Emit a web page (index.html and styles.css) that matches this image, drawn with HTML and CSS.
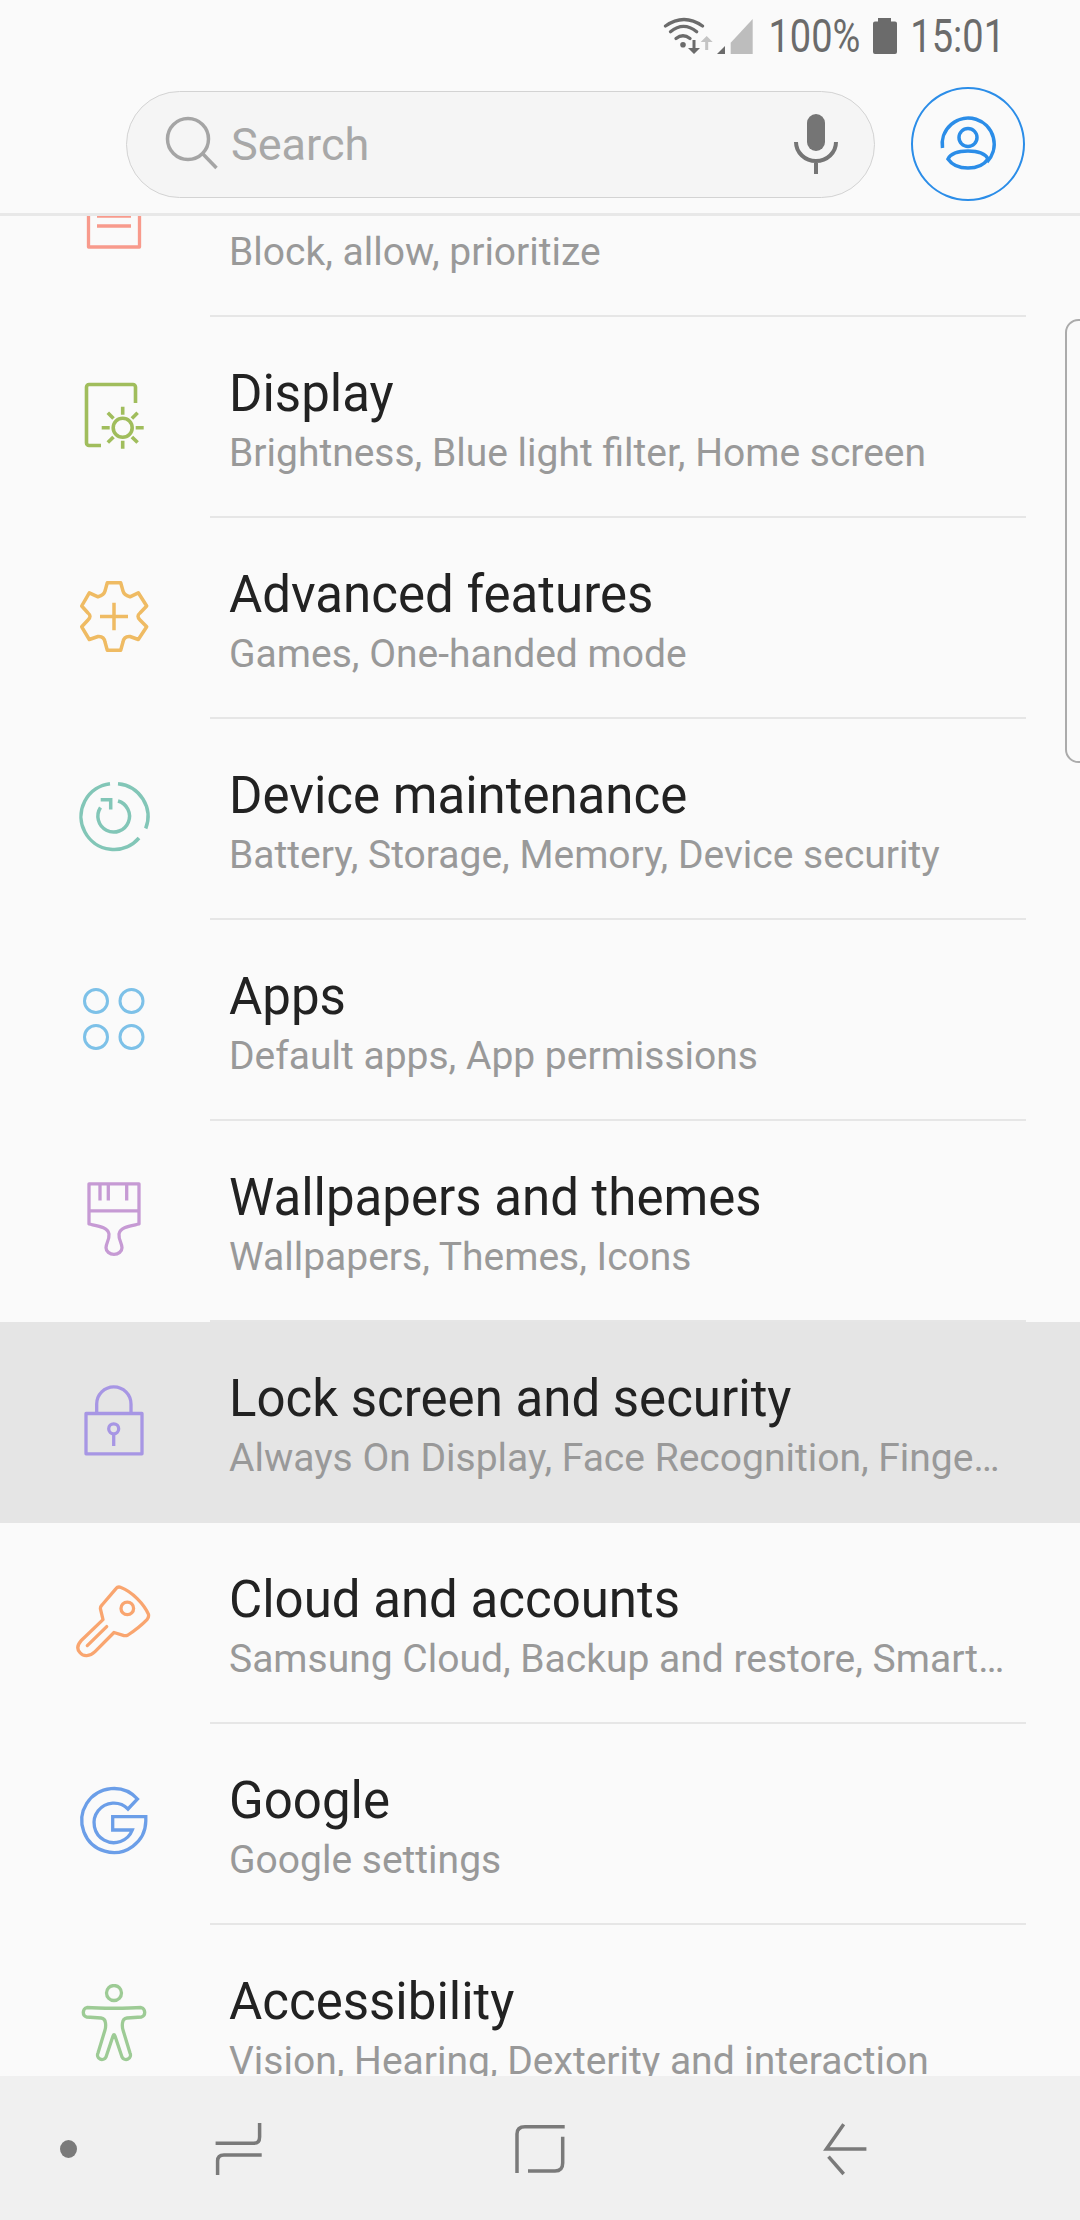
FILE: index.html
```html
<!DOCTYPE html>
<html lang="en">
<head>
  <meta charset="UTF-8" />
  <title>Settings</title>
  <link rel="stylesheet" href="styles.css">
</head>
<body>
<div class="phone">

  <header class="top">
    <div class="status">
      <svg class="status-icons" width="95" height="40" viewBox="0 0 95 40">
        <g fill="none" stroke="#6b6b6b" stroke-width="3.300" stroke-linecap="round">
          <path d="M5.5 10Q24-3 42.5 10"/>
          <path d="M10.5 15.7Q23.5 5 36.7 15.7"/>
          <path d="M16 22.5Q23 17 30 22.5"/>
        </g>
        <circle cx="23" cy="28.7" r="2.8" fill="#6b6b6b"/>
        <path d="M32.5 24h3v8H40l-6 6-6-6h4.500z" fill="#6b6b6b"/>
        <path d="M45.2 34h3v-8h4.500l-6-6-6 6h4.500z" fill="#c4c4c4"/>
        <path d="M57 38l8-8v8z" fill="#6b6b6b"/>
        <path d="M70.7 38V26.7L92.7 3v35z" fill="#bdbdbd"/>
      </svg>
      <span class="status-text">100%</span>
      <svg class="battery" width="24" height="36" viewBox="0 0 24 36">
        <path d="M5 0h13v3.5h4a2 2 0 0 1 2 2V34a2 2 0 0 1-2 2H2a2 2 0 0 1-2-2V5.500a2 2 0 0 1 2-2h3z" fill="#6b6b6b"/>
      </svg>
      <span class="status-text">15:01</span>
    </div>
    <div class="search-row">
      <div class="search">
        <svg class="search-icon" width="56" height="56" viewBox="0 0 56 56" fill="none" stroke="#a5a5a5" stroke-width="3.500">
          <circle cx="23" cy="23" r="20.500"/>
          <path d="M37.500 37.500L51.500 52"/>
        </svg>
        <span class="search-label">Search</span>
        <svg class="mic" width="44" height="60" viewBox="0 0 44 60">
          <rect x="13" y="0" width="18" height="37" rx="9" fill="#757575"/>
          <path d="M2 28a20 19 0 0 0 40 0M22 47v13" fill="none" stroke="#757575" stroke-width="4"/>
        </svg>
      </div>
      <button class="profile">
        <svg width="64" height="64" viewBox="0 0 64 64" fill="none" stroke="#2b8de8" stroke-width="3.500">
          <path d="M6.500 36A26 26 0 1 1 51 50"/>
          <circle cx="32" cy="25.500" r="9"/>
          <path d="M12 47C15 41 23 39 32 39s17 2 20 8c-4 6-11 9-20 9s-16-3-20-9z"/>
        </svg>
      </button>
    </div>
  </header>

  <div class="list-wrap">
    <main class="list">

      <!-- scrolled under the header, only the subtitle shows -->
      <div class="row">
        <div class="row-icon">
          <svg width="80" height="80" viewBox="0 0 80 80" fill="none" stroke="#f89a8c" stroke-width="3.300" stroke-linejoin="round">
            <path d="M14.500 5H65.500V72H14.500Z"/>
            <path d="M23 41H57M23 51H57"/>
          </svg>
        </div>
        <div class="row-body">
          <div class="row-title"></div>
          <div class="row-sub">Block, allow, prioritize</div>
        </div>
      </div>

      <div class="row">
        <div class="row-icon">
          <svg width="80" height="80" viewBox="0 0 80 80" fill="none" stroke="#a0bd5c" stroke-width="3.600">
            <path d="M61.500 27V11a2.500 2.500 0 0 0-2.500-2.500H15a2.500 2.500 0 0 0-2.500 2.500V67a2.500 2.500 0 0 0 2.500 2.500H27"/>
            <circle cx="48.700" cy="51.700" r="9.500"/>
            <path d="M48.700 30.700v8M48.700 64.700v8M27.700 51.700h8M61.700 51.700h8M33.800 36.800l5.700 5.700M57.900 60.900l5.700 5.700M33.800 66.600l5.700-5.700M57.900 42.500l5.700-5.700"/>
          </svg>
        </div>
        <div class="row-body">
          <div class="row-title">Display</div>
          <div class="row-sub">Brightness, Blue light filter, Home screen</div>
        </div>
      </div>

      <div class="row">
        <div class="row-icon">
          <svg width="80" height="80" viewBox="0 0 80 80" fill="none" stroke="#efbb63" stroke-width="3.500" stroke-linejoin="round">
            <path d="M33.300 5.800H46.700L49 14Q50 18 56 19.800L64.300 15.800L72.700 29L66 36Q62 39.200 66 43L72.700 49.800L64.300 62.500L56 59.500Q50 59 49 65L46.700 73.200H33.300L31 65Q30 59 24 59.500L15.300 62.500L7.700 49.800L14 43Q18 39.200 14 36L7.700 29L15.300 15.800L24 19.800Q30 18 31 14Z"/>
            <path d="M26 39.500H54M40 25.800V53.200"/>
          </svg>
        </div>
        <div class="row-body">
          <div class="row-title">Advanced features</div>
          <div class="row-sub">Games, One-handed mode</div>
        </div>
      </div>

      <div class="row">
        <div class="row-icon">
          <svg width="80" height="80" viewBox="0 1.500 80 80" fill="none" stroke="#82c6b7" stroke-width="3.500">
            <path d="M36 7.200A33 33 0 1 0 65 61.500"/>
            <path d="M44 7.200A33 33 0 0 1 71.700 52"/>
            <path d="M44 24.500A15.800 15.800 0 1 1 26.500 31"/>
            <path d="M26.700 23.300H36.700V33"/>
          </svg>
        </div>
        <div class="row-body">
          <div class="row-title">Device maintenance</div>
          <div class="row-sub">Battery, Storage, Memory, Device security</div>
        </div>
      </div>

      <div class="row">
        <div class="row-icon">
          <svg width="80" height="80" viewBox="0 0 80 80" fill="none" stroke="#7dc1e8" stroke-width="3">
            <circle cx="22" cy="22" r="11.500"/>
            <circle cx="57.500" cy="22" r="11.500"/>
            <circle cx="22" cy="58" r="11.500"/>
            <circle cx="57.500" cy="58" r="11.500"/>
          </svg>
        </div>
        <div class="row-body">
          <div class="row-title">Apps</div>
          <div class="row-sub">Default apps, App permissions</div>
        </div>
      </div>

      <div class="row">
        <div class="row-icon">
          <svg width="80" height="80" viewBox="0 0 80 80" fill="none" stroke="#c69ad4" stroke-width="3.300" stroke-linejoin="round">
            <path d="M15 3.800H65V44C56 46 46 47 45 54C44.500 60 48 63 48 67.800A8 6.500 0 0 1 32 67.800C32 63 35.500 60 35 54C34 47 24 46 15 44Z"/>
            <path d="M15 30.800H65M26 3.800V20.500M34.300 3.800V20.500M52.700 3.800V20.500"/>
          </svg>
        </div>
        <div class="row-body">
          <div class="row-title">Wallpapers and themes</div>
          <div class="row-sub">Wallpapers, Themes, Icons</div>
        </div>
      </div>

      <div class="row active">
        <div class="row-icon">
          <svg width="80" height="80" viewBox="0 0 80 80" fill="none" stroke="#a796e4" stroke-width="3.300" stroke-linejoin="round">
            <path d="M12 32.500H68V72.800H12Z"/>
            <path d="M22.700 32.500V23a17.150 17.150 0 0 1 34.300 0V32.500"/>
            <circle cx="39.700" cy="47.800" r="5"/>
            <path d="M39.700 52.800V65"/>
          </svg>
        </div>
        <div class="row-body">
          <div class="row-title">Lock screen and security</div>
          <div class="row-sub">Always On Display, Face Recognition, Fingerprint Scanner</div>
        </div>
      </div>

      <div class="row">
        <div class="row-icon">
          <svg width="80" height="80" viewBox="0 0 80 80" fill="none" stroke="#f9a56f" stroke-width="3.300" stroke-linejoin="round" stroke-linecap="round">
            <path d="M42 6.600Q44 4 47 5.500C58 9.700 70 22 74.500 32.400Q75 35.500 73 37.600C66 44.800 60 49 54 53Q52 54 50 53.600L40 50.500L21 69.600C16 74.700 9 74.700 6 70.600C3 67.500 3 63.400 7 58.800L29 37.600L26.500 27.200Q26 25 28 23Z"/>
            <path d="M32.700 44.600L13.300 63.600"/>
            <circle cx="53.300" cy="26.400" r="6.300"/>
          </svg>
        </div>
        <div class="row-body">
          <div class="row-title">Cloud and accounts</div>
          <div class="row-sub">Samsung Cloud, Backup and restore, Smart Switch</div>
        </div>
      </div>

      <div class="row">
        <div class="row-icon">
          <svg width="80" height="80" viewBox="0 0 80 80" fill="none" stroke="#6b9ee8" stroke-width="3.300">
            <path d="M63.500 16A32 32 0 1 0 71.800 38V33.600H38.700V47H58.300A19.800 19.800 0 1 1 54 26Z"/>
          </svg>
        </div>
        <div class="row-body">
          <div class="row-title">Google</div>
          <div class="row-sub">Google settings</div>
        </div>
      </div>

      <div class="row">
        <div class="row-icon">
          <svg width="80" height="80" viewBox="0 0 80 80" fill="none" stroke="#9dcb95" stroke-width="3.300" stroke-linejoin="round">
            <circle cx="40" cy="9" r="7.500"/>
            <path d="M13 23.500C25 24.500 55 24.500 67 23.500A5 5 0 0 1 67.500 33L53 34Q49 34.500 48.500 39Q48 43 49 46L56 69A4.300 4.300 0 0 1 48 73L41 52Q40 49.500 39 52L32 73A4.300 4.300 0 0 1 24 69L31 46Q32 43 31.500 39Q31 34.500 27 34L12.500 33A5 5 0 0 1 13 23.500Z"/>
          </svg>
        </div>
        <div class="row-body">
          <div class="row-title">Accessibility</div>
          <div class="row-sub">Vision, Hearing, Dexterity and interaction</div>
        </div>
      </div>

    </main>
    <div class="edge-handle"></div>
  </div>

  <nav class="navbar">
    <svg class="nav-dot" width="60" height="60" viewBox="0 0 60 60">
      <ellipse cx="30.500" cy="31" rx="8.500" ry="9" fill="#7a7a7a"/>
    </svg>
    <svg class="nav-recent" width="60" height="60" viewBox="0 0 60 60" fill="none" stroke="#7a7a7a" stroke-width="3.500">
      <path d="M50.600 5V19Q50.600 25.300 45 25.300H6.600"/>
      <path d="M52.700 37H15Q8.600 37 8.600 43V57"/>
    </svg>
    <svg class="nav-home" width="60" height="60" viewBox="0 0 60 60" fill="none" stroke="#7a7a7a" stroke-width="3.500">
      <path d="M53.700 8.700H14Q6 8.700 6 16V55"/>
      <path d="M17 53H44Q51.700 53 51.700 45V18.700"/>
    </svg>
    <svg class="nav-back" width="60" height="60" viewBox="0 0 60 60" fill="none" stroke="#7a7a7a" stroke-width="3.500">
      <path d="M52.400 31H12.400L29.700 6.300"/>
      <path d="M14.500 38.700L29.700 56"/>
    </svg>
  </nav>

</div>
</body>
</html>
```

FILE: styles.css
```css
* {
  box-sizing: border-box;
}

body {
  margin: 0;
  background: #fafafa;
  font-family: Roboto, sans-serif;
}

.phone {
  width: 1080px;
  height: 2220px;
  display: flex;
  flex-direction: column;
  overflow: hidden;
}

/* status bar + search */
.top {
  height: 216px;
  flex: none;
  border-bottom: 3px solid #e8e8e8;
  background: #fafafa;
}

.status {
  height: 72px;
  padding-right: 75px;
  display: flex;
  justify-content: flex-end;
  align-items: center;
  color: #6b6b6b;
}

.status-icons {
  margin-right: 13px;
}

.status-text {
  display: inline-block;
  font-size: 38px;
  transform: scaleY(1.22);
}

.battery {
  margin: 0 13px;
}

.search-row {
  padding: 15px 55px 12px 126px;
  display: flex;
  align-items: center;
  gap: 36px;
}

.search {
  width: 750px;
  height: 107px;
  padding: 0 36px 0 38px;
  display: flex;
  align-items: center;
  background: #f5f5f5;
  border: 1.5px solid #d3d3d3;
  border-radius: 54px;
}

.search-icon {
  flex: none;
}

.search-label {
  margin-left: 10px;
  flex: 1;
  font-size: 45px;
  color: #a8a8a8;
}

.profile {
  width: 114px;
  height: 114px;
  padding: 0;
  display: flex;
  align-items: center;
  justify-content: center;
  background: none;
  border: 2.500px solid #2b8de8;
  border-radius: 50%;
}

/* settings list */
.list-wrap {
  flex: 1;
  position: relative;
  overflow: hidden;
}

.list {
  margin-top: -100px;
}

.row {
  height: 201px;
  display: flex;
}

.row.active {
  background: #e5e5e5;
}

.row-icon {
  width: 210px;
  flex: none;
  padding: 0 0 3px 74px;
  display: flex;
  align-items: center;
}

.row-body {
  flex: 1;
  min-width: 0;
  margin-right: 54px;
  padding: 12px 16px 0 19px;
  display: flex;
  flex-direction: column;
  justify-content: center;
  border-bottom: 2px solid #e6e6e6;
}

.row.active .row-body {
  border-bottom-color: transparent;
}

.row-title {
  height: 61px;
  font-size: 51px;
  line-height: 61px;
  color: #222;
}

.row-sub {
  font-size: 39px;
  line-height: 58px;
  color: #999;
  white-space: nowrap;
  overflow: hidden;
  text-overflow: ellipsis;
}

.edge-handle {
  position: absolute;
  top: 103px;
  right: -12px;
  width: 27px;
  height: 444px;
  border: 2.500px solid #ababab;
  border-radius: 14px;
}

/* bottom buttons */
.navbar {
  height: 144px;
  flex: none;
  padding-left: 38px;
  display: flex;
  align-items: center;
  background: #f0f0f0;
}

.nav-recent {
  margin-left: 111px;
}

.nav-home {
  margin-left: 242px;
}

.nav-back {
  margin-left: 243px;
}
```
